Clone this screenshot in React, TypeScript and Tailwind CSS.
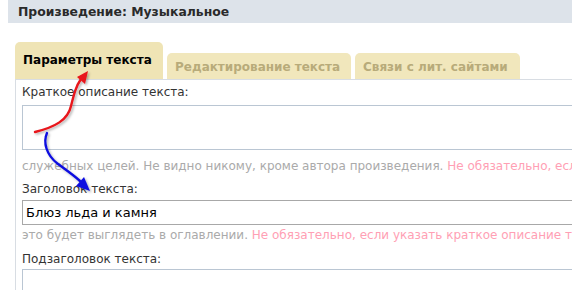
import React from 'react';

const FONT = { fontFamily: '"DejaVu Sans", Verdana, sans-serif' };

function Arrows() {
  return (
    <svg
      className="absolute left-0 top-0 pointer-events-none"
      width="572"
      height="290"
      viewBox="0 0 572 290"
    >
      <defs>
        <filter id="sh" x="-20%" y="-20%" width="140%" height="140%">
          <feDropShadow dx="1.5" dy="1.5" stdDeviation="1" floodColor="#000" floodOpacity="0.3" />
        </filter>
      </defs>
      <g filter="url(#sh)">
        {/* red arrow: up to the active tab */}
        <path
          d="M35 132 C 55 127, 68 120, 71 106 C 74 94, 76 86, 81 79"
          fill="none"
          stroke="#e8141a"
          strokeWidth="2.4"
          strokeLinecap="round"
        />
        <polygon points="88,71 77,77 85,84" fill="#e8141a" />
        {/* blue arrow: down to the title label */}
        <path
          d="M47 133 C 43 142, 46 155, 58 164 C 66 170, 72 174, 80 181"
          fill="none"
          stroke="#1010e0"
          strokeWidth="2.4"
          strokeLinecap="round"
        />
        <polygon points="90,191 76,186 84,177" fill="#1010e0" />
      </g>
    </svg>
  );
}

export default function App() {
  return (
    <div className="relative w-[572px] h-[290px] overflow-hidden bg-white" style={FONT}>
      {/* Header */}
      <div className="ml-2 h-[23px] bg-[#dde3ea] pl-[10px] text-[12.4px] font-bold leading-[23px] text-[#2a2a2a]">
        Произведение: Музыкальное
      </div>

      {/* Tabs */}
      <div className="mt-[19px] ml-[15px] flex items-end gap-[4px]">
        <div className="h-[37px] w-[148px] rounded-t-[5px] bg-[#efe4b5] pl-[8px] pt-[9px] text-[12px] font-bold text-black">
          Параметры текста
        </div>
        <div className="h-[26px] w-[184px] rounded-t-[5px] bg-[#f1e7bc] pl-[8px] pt-[5px] text-[12px] font-bold text-[#b8ab7a]">
          Редактирование текста
        </div>
        <div className="h-[26px] w-[165px] rounded-t-[5px] bg-[#f1e7bc] pl-[8px] pt-[5px] text-[12px] font-bold text-[#b8ab7a]">
          Связи с лит. сайтами
        </div>
      </div>

      {/* Panel */}
      <div className="ml-[15px] h-[220px] border-l border-t border-[#d8dde3] pl-[6px] pt-[3px] text-[12px] whitespace-nowrap">
        <div className="leading-[18px] text-[#333]">Краткое описание текста:</div>
        <div className="mt-[4px] h-[45px] w-[600px] border border-[#bac6d3] bg-white" />
        <div className="mt-[7px] leading-[18px] text-[#aaaaaa]">
          служебных целей. Не видно никому, кроме автора произведения.{' '}
          <span className="text-[#ffa0b4]">Не обязательно, если автор не указан.</span>
        </div>
        <div className="mt-[5px] leading-[18px] text-[#333]">Заголовок текста:</div>
        <div className="mt-[2px] h-[25px] w-[600px] border border-[#a8a8a8] bg-white pl-[3px] text-[13px] leading-[23px] text-black">
          Блюз льда и камня
        </div>
        <div className="mt-[1px] leading-[18px] text-[#aaaaaa]">
          это будет выглядеть в оглавлении.{' '}
          <span className="text-[#ffa0b4]">Не обязательно, если указать краткое описание текста.</span>
        </div>
        <div className="mt-[6px] leading-[18px] text-[#333]">Подзаголовок текста:</div>
        <div className="mt-[1px] h-[25px] w-[600px] border border-[#bac6d3] bg-white" />
      </div>

      <Arrows />
    </div>
  );
}
